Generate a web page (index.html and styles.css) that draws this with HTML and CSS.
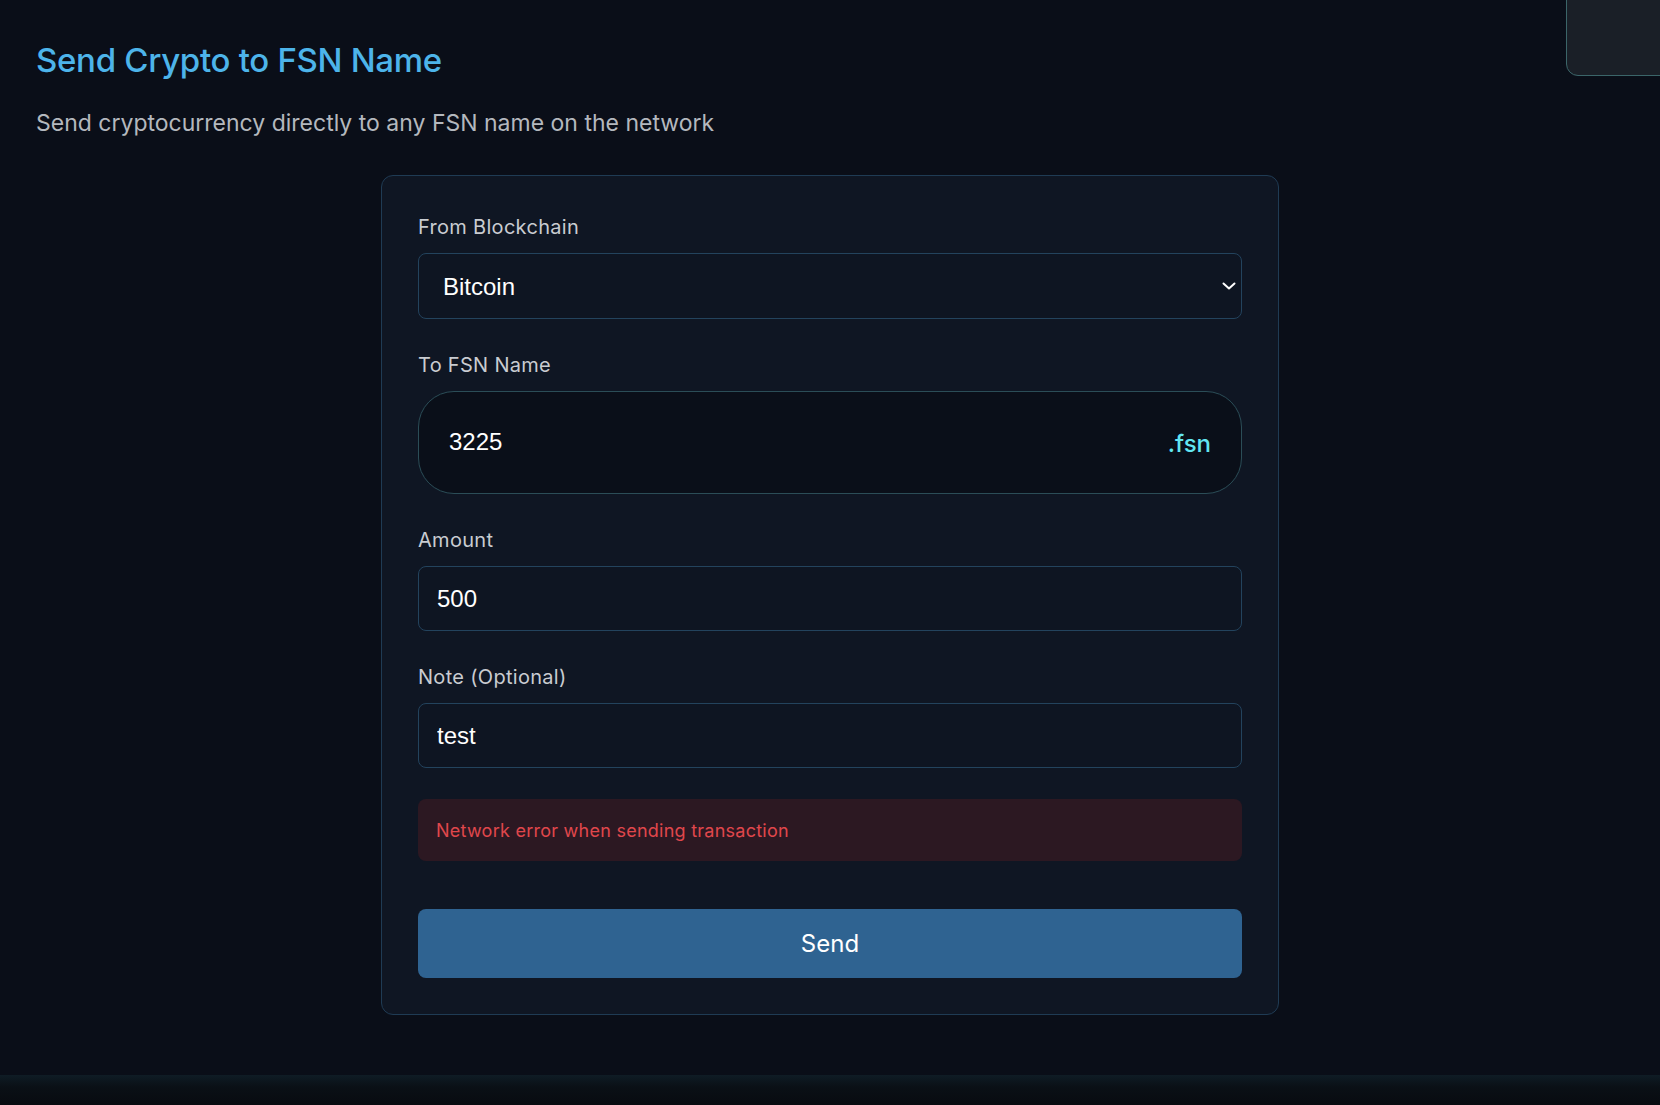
FILE: index.html
```html
<!DOCTYPE html>
<html lang="en">
<head>
<meta charset="utf-8">
<title>Send Crypto to FSN Name</title>
<link rel="stylesheet" href="styles.css">
</head>
<body>
<div class="corner-panel"></div>
<main class="page">
  <h1 class="title">Send Crypto to FSN Name</h1>
  <p class="subtitle">Send cryptocurrency directly to any FSN name on the network</p>

  <form class="card">
    <div class="field">
      <label class="label">From Blockchain</label>
      <div class="select-wrap">
        <select class="select">
          <option>Bitcoin</option>
          <option>Ethereum</option>
        </select>
        <svg class="chevron" width="14" height="8" viewBox="0 0 14 8" fill="none">
          <path d="M1.5 1.5 L7 6.5 L12.5 1.5" stroke="#ffffff" stroke-width="2" stroke-linecap="round" stroke-linejoin="round"/>
        </svg>
      </div>
    </div>

    <div class="field">
      <label class="label">To FSN Name</label>
      <div class="fsn-box">
        <input class="fsn-input" type="text" value="3225">
        <span class="fsn-suffix">.fsn</span>
      </div>
    </div>

    <div class="field">
      <label class="label">Amount</label>
      <input class="input" type="text" value="500">
    </div>

    <div class="field">
      <label class="label">Note (Optional)</label>
      <input class="input" type="text" value="test">
    </div>

    <div class="error">Network error when sending transaction</div>

    <button class="send" type="button">Send</button>
  </form>
</main>
<div class="footer-band"></div>
</body>
</html>
```

FILE: styles.css
```css
* { box-sizing: border-box; }

html, body {
  margin: 0;
  padding: 0;
}

body {
  background: #0a0e18;
  font-family: Inter, "Noto Sans", sans-serif;
  color: #c9ccd1;
  min-height: 1105px;
  position: relative;
  overflow: hidden;
}

.corner-panel {
  position: absolute;
  top: -20px;
  left: 1566px;
  width: 140px;
  height: 96px;
  background: #1a1f27;
  border: 1px solid #3b6569;
  border-radius: 12px;
}

.page {
  padding: 40px 36px 0 36px;
}

.title {
  margin: 0;
  font-size: 33px;
  line-height: 40px;
  font-weight: 500;
  color: #4db4ea;
  letter-spacing: -0.3px;
}

.subtitle {
  margin: 28px 0 0 0;
  font-size: 23px;
  line-height: 30px;
  font-weight: 400;
  color: #b4b8be;
  letter-spacing: 0;
}

.card {
  width: 898px;
  margin: 37px auto 0 auto;
  padding: 36px;
  background: #0f1623;
  border: 1px solid #1f3b54;
  border-radius: 12px;
  display: flex;
  flex-direction: column;
}

.field {
  display: flex;
  flex-direction: column;
  margin-bottom: 31px;
}

.label {
  font-size: 20px;
  line-height: 30px;
  margin-bottom: 11px;
  color: #c9ccd1;
  letter-spacing: 0.3px;
}

.select-wrap {
  position: relative;
}

.select {
  appearance: none;
  -webkit-appearance: none;
  width: 100%;
  height: 66px;
  padding: 0 24px;
  background: #0e1522;
  border: 1px solid #23435d;
  border-radius: 8px;
  color: #ffffff;
  font-family: "Liberation Sans", Arial, sans-serif;
  font-size: 24px;
  outline: none;
}

.chevron {
  position: absolute;
  right: 6px;
  top: 29px;
  pointer-events: none;
}

.fsn-box {
  display: flex;
  align-items: center;
  height: 103px;
  padding: 0 30px 0 30px;
  background: #0a0f19;
  border: 1px solid #2b4d57;
  border-radius: 36px;
}

.fsn-input {
  flex: 1;
  min-width: 0;
  background: transparent;
  border: none;
  outline: none;
  color: #ffffff;
  font-family: "Liberation Sans", Arial, sans-serif;
  font-size: 24px;
  padding: 0;
  margin-top: -1px;
}

.fsn-suffix {
  color: #62e6f2;
  font-size: 24px;
  font-weight: 500;
  margin-top: 2px;
}

.input {
  height: 65px;
  padding: 0 18px;
  background: #0e1522;
  border: 1px solid #23435d;
  border-radius: 8px;
  color: #ffffff;
  font-family: "Liberation Sans", Arial, sans-serif;
  font-size: 24px;
  outline: none;
}

.error {
  height: 62px;
  display: flex;
  align-items: center;
  padding: 0 18px;
  background: #2c1822;
  border-radius: 8px;
  color: #e0474c;
  font-size: 18px;
  letter-spacing: 0.25px;
}

.send {
  margin-top: 48px;
  height: 69px;
  border: none;
  border-radius: 8px;
  background: #2f6391;
  color: #ffffff;
  font-family: Inter, "Noto Sans", sans-serif;
  font-size: 24px;
  cursor: pointer;
}

.footer-band {
  position: absolute;
  left: 0;
  right: 0;
  top: 1075px;
  height: 30px;
  background: linear-gradient(180deg, #0f1c25 0%, #0a1016 40%, #080b10 100%);
}
```
